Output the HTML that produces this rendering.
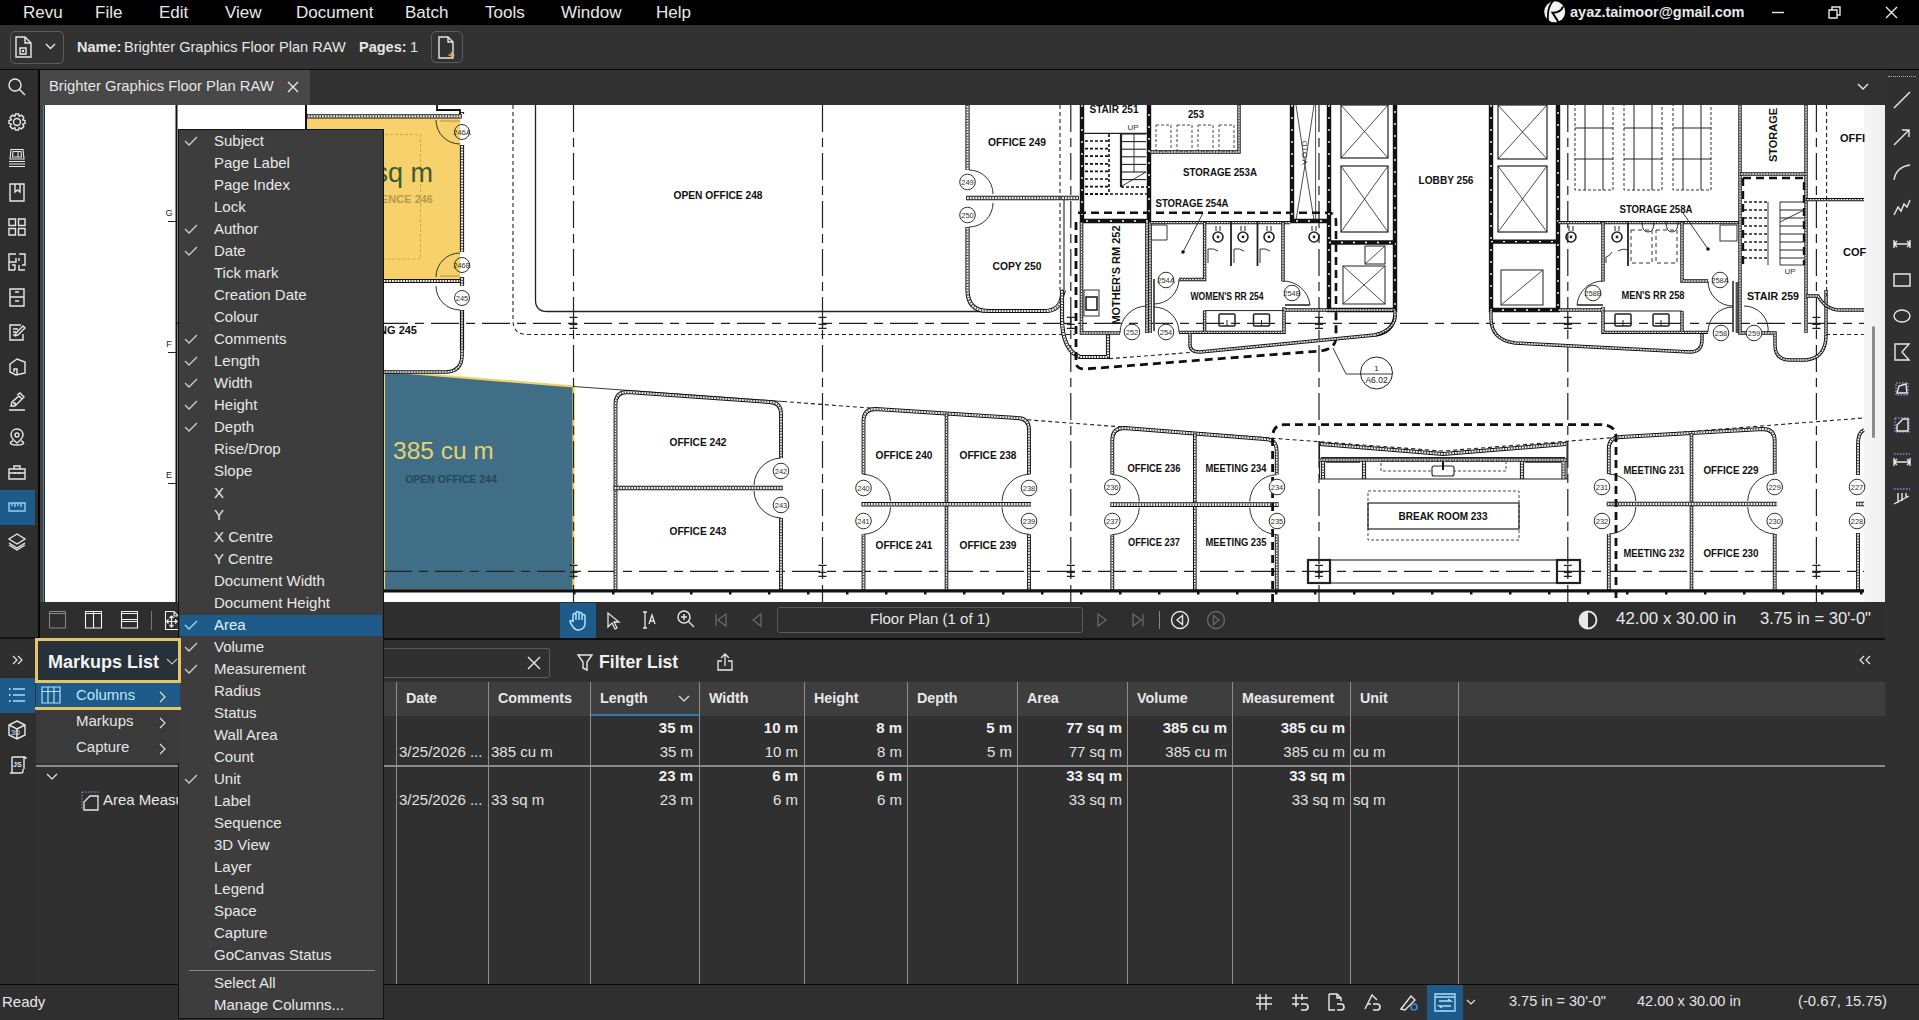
<!DOCTYPE html>
<html><head><meta charset="utf-8">
<style>
*{margin:0;padding:0;box-sizing:border-box}
html,body{width:1919px;height:1020px;overflow:hidden;background:#2c2c2c;font-family:"Liberation Sans",sans-serif;color:#e6e6e6}
.a{position:absolute}
.t{position:absolute;white-space:nowrap;line-height:1}
.b{font-weight:bold}
svg.i{position:absolute;overflow:visible}
svg.i *{fill:none;stroke:#e8e8e8;stroke-width:1.4}
#menubar{left:0;top:0;width:1919px;height:25px;background:#000}
#menubar .t{font-size:17px;top:4px;color:#e8e8e8}
#toolbar{left:0;top:25px;width:1919px;height:45px;background:#323232;border-bottom:1px solid #070707}
#leftbar{left:0;top:70px;width:38px;height:914px;background:#2e2e2e}
#vsep{left:38px;top:70px;width:1.5px;height:568px;background:#050505}
#tabbar{left:40px;top:70px;width:1845px;height:35px;background:#313131}
#tab{left:40px;top:70px;width:270px;height:35px;background:#484848}
#rightbar{left:1885px;top:70px;width:34px;height:914px;background:#303030}
#docwrap{left:40px;top:105px;width:1845px;height:497px;background:#454545}
#doc{left:45px;top:105px;width:1840px;height:497px;background:#fff;overflow:hidden}
#viewbar{left:40px;top:602px;width:1845px;height:38px;background:#2e2e2e;border-bottom:2px solid #0c0c0c}
#panel{left:35px;top:640px;width:1850px;height:344px;background:#303030}
#status{left:0;top:984px;width:1919px;height:36px;background:#2f2f2f;border-top:1px solid #0a0a0a}
#menu{left:178px;top:129px;width:206px;height:890px;background:#3d3d3d;border:1px solid #121212}
.mi{position:absolute;left:35px;font-size:15px;color:#e8e8e8;white-space:nowrap;line-height:1}
.ck{position:absolute;left:5px;width:14px;height:10px}
.th{position:absolute;top:691px;font-size:14.3px;font-weight:bold;color:#e8e8e8;white-space:nowrap;line-height:1}
.cl{position:absolute;top:682px;width:1px;height:302px;background:#8e8e8e}
.v{position:absolute;font-size:15px;white-space:nowrap;line-height:1;color:#e2e2e2}
.vb{font-weight:bold;color:#f0f0f0}
.r{text-align:right}
</style></head><body>

<div id="menubar" class="a">
<div class="t" style="left:23px">Revu</div>
<div class="t" style="left:95px">File</div>
<div class="t" style="left:159px">Edit</div>
<div class="t" style="left:225px">View</div>
<div class="t" style="left:296px">Document</div>
<div class="t" style="left:405px">Batch</div>
<div class="t" style="left:485px">Tools</div>
<div class="t" style="left:561px">Window</div>
<div class="t" style="left:656px">Help</div>
<svg class="i" style="left:1543px;top:0px" width="24" height="25" viewBox="0 0 24 25"><circle cx="11.7" cy="11.8" r="10.5" style="fill:#f2f2f2;stroke:none"/><path d="M10.5 0.5 Q3.5 7 5.2 22" style="stroke:#000;stroke-width:1.8"/><path d="M20 6.5 Q18 12.5 9.5 12.8 L16 23" style="stroke:#000;stroke-width:2"/></svg>
<div class="t b" style="left:1570px;top:5px;font-size:14.5px">ayaz.taimoor@gmail.com</div>
<svg class="i" style="left:1770px;top:5px" width="16" height="16"><path d="M2 7.5 H14"/></svg>
<svg class="i" style="left:1827px;top:5px" width="16" height="16"><path d="M2 5 H10 V13 H2 Z M5 5 V2 H13 V10 H10"/></svg>
<svg class="i" style="left:1884px;top:5px" width="16" height="16"><path d="M2 2 L13 13 M13 2 L2 13"/></svg>
</div>
<div id="toolbar" class="a"></div>
<div class="a" style="left:10px;top:31px;width:54px;height:33px;border:1.5px solid #5c5c5c;border-radius:5px"></div>
<svg class="i" style="left:15px;top:36px" width="20" height="24"><path d="M1 1 H10 L16 7 V21 H1 Z M10 1 V7 H16"/><path d="M5 12 H11 V18 H5 Z"/><rect x="7" y="14" width="2" height="2" style="fill:#e8e8e8;stroke:none"/></svg>
<svg class="i" style="left:45px;top:43px" width="12" height="8"><path d="M1 1 L5.5 5.5 L10 1"/></svg>
<div class="t b" style="left:77px;top:40px;font-size:14.5px">Name:</div>
<div class="t" style="left:124px;top:40px;font-size:14.6px">Brighter Graphics Floor Plan RAW</div>
<div class="t b" style="left:359px;top:40px;font-size:14.5px">Pages:</div>
<div class="t" style="left:410px;top:40px;font-size:14.5px">1</div>
<div class="a" style="left:431px;top:31px;width:32px;height:32px;border:1.5px solid #5c5c5c;border-radius:5px"></div>
<svg class="i" style="left:438px;top:36px" width="20" height="24"><path d="M1 1 H10 L15 6 V22 H1 Z M10 1 V6 H15"/><path d="M13.5 16 V22 M10.5 19 H16.5" style="stroke:#d8b040"/></svg>
<div id="leftbar" class="a"></div>
<div id="vsep" class="a"></div>
<div class="a" style="left:0;top:490px;width:35px;height:35px;background:#1f5b8a"></div>
<svg class="i" style="left:7px;top:77px" width="20" height="20" viewBox="0 0 20 20"><circle cx="8" cy="8" r="6"/><path d="M12.5 12.5 L18 18"/></svg>
<svg class="i" style="left:7px;top:112px" width="20" height="20" viewBox="0 0 20 20"><circle cx="10" cy="10" r="3.5"/><path d="M8.5 2 H11.5 L12.2 4.3 L14.5 3.2 L16.8 5.5 L15.7 7.8 L18 8.5 V11.5 L15.7 12.2 L16.8 14.5 L14.5 16.8 L12.2 15.7 L11.5 18 H8.5 L7.8 15.7 L5.5 16.8 L3.2 14.5 L4.3 12.2 L2 11.5 V8.5 L4.3 7.8 L3.2 5.5 L5.5 3.2 L7.8 4.3 Z"/></svg>
<svg class="i" style="left:7px;top:147px" width="20" height="20" viewBox="0 0 20 20"><path d="M4 2.5 H16 L17 12 H3 Z M6 4.5 H14 L14.5 10 H5.5 Z M11 4.5 V10 M2 14.5 H18 M2 17 H18 M2 19.5 H18" style="stroke-width:1.1"/></svg>
<svg class="i" style="left:7px;top:182px" width="20" height="20" viewBox="0 0 20 20"><path d="M3 2 H17 V19 H3 Z M8 2 V10 L10.5 8 L13 10 V2"/></svg>
<svg class="i" style="left:7px;top:217px" width="20" height="20" viewBox="0 0 20 20"><path d="M2 2 H8.5 V8.5 H2 Z M11.5 2 H18 V8.5 H11.5 Z M2 11.5 H8.5 V18 H2 Z M11.5 11.5 H18 V18 H11.5 Z"/></svg>
<svg class="i" style="left:7px;top:252px" width="20" height="20" viewBox="0 0 20 20"><path d="M9 2 H2 V18 H8 M8 18 V13 H5 M2 10 H9 V6 M12 2 H18 V13 H15 M12 13 V18 H18 M12 6 V9"/></svg>
<svg class="i" style="left:7px;top:287px" width="20" height="20" viewBox="0 0 20 20"><path d="M3 2 H17 V19 H3 Z M3 10 H17 M8 5 H12 M8 14 H12"/></svg>
<svg class="i" style="left:7px;top:322px" width="20" height="20" viewBox="0 0 20 20"><path d="M14 3 H3 V18 H16 V12 M6 7 H11 M6 10 H9 M6 13 H9 M11 13 L18 6 L16 4 L9 11 L8.5 14 Z"/></svg>
<svg class="i" style="left:7px;top:357px" width="20" height="20" viewBox="0 0 20 20"><path d="M3 7 L10 2 L18 5 V16 L9 18 L3 15 Z M7 15 V12 H10 V17"/></svg>
<svg class="i" style="left:7px;top:392px" width="20" height="20" viewBox="0 0 20 20"><path d="M2 18 H18 M8 14 L4 14 L5 10 L12 4 L15 7 L8 14 M10 3 L13 1 L17 5 L15 7 M6 11 H8 V13"/></svg>
<svg class="i" style="left:7px;top:427px" width="20" height="20" viewBox="0 0 20 20"><path d="M10 2 C6 2 4 5 4 8 C4 11 10 16 10 16 C10 16 16 11 16 8 C16 5 14 2 10 2 Z"/><circle cx="10" cy="8" r="2"/><path d="M6 14 C2 15 2 18 10 18 C18 18 18 15 14 14"/></svg>
<svg class="i" style="left:7px;top:462px" width="20" height="20" viewBox="0 0 20 20"><path d="M2 7 H18 V17 H2 Z M7 7 V4 H13 V7 M2 11 H18 M8 10 V12 M12 10 V12"/></svg>
<svg class="i" style="left:7px;top:497px" width="20" height="20" viewBox="0 0 20 20"><path d="M2 6 H18 V14 H2 Z M5 6 V9 M8 6 V10 M11 6 V9 M14 6 V10" style="stroke:#8fd0f0"/></svg>
<svg class="i" style="left:7px;top:532px" width="20" height="20" viewBox="0 0 20 20"><path d="M10 2 L18 7 L10 12 L2 7 Z M2 11 L10 16 L18 11 M2 13 L10 18 L18 13"/></svg>
<div class="a" style="left:0;top:637px;width:38px;height:2px;background:#141414"></div>
<div class="a" style="left:35px;top:640px;width:1px;height:344px;background:#1a1a1a"></div>
<div class="a" style="left:0;top:678px;width:35px;height:35px;background:#1f5b8a"></div>
<svg class="i" style="left:12px;top:655px" width="12" height="10"><path d="M1 1 L5 5 L1 9 M6 1 L10 5 L6 9" style="stroke-width:1.2"/></svg>
<svg class="i" style="left:8px;top:687px" width="18" height="16"><path d="M5 2 H17 M5 8 H17 M5 14 H17" style="stroke:#9fe0ff;stroke-width:1.6"/><path d="M1 2 H2.5 M1 8 H2.5 M1 14 H2.5" style="stroke:#9fe0ff;stroke-width:1.8"/></svg>
<svg class="i" style="left:7px;top:720px" width="20" height="20"><path d="M10 1 L18 5 V15 L10 19 L2 15 V5 Z M2 5 L10 9 L18 5 M10 9 V19"/><text x="4" y="15" style="font-size:7px;fill:#e8e8e8;stroke:none;font-family:Liberation Sans">3D</text></svg>
<svg class="i" style="left:7px;top:754px" width="20" height="22"><path d="M5 3 H17 V15 M5 3 V19 H13 M3 19 H14 Q16 19 16 17 V15 M17 3 Q19 3 19 5"/><text x="6" y="13" style="font-size:7px;fill:#e8e8e8;stroke:none;font-family:Liberation Sans;font-weight:bold">JS</text></svg>
<div id="tabbar" class="a"></div>
<div id="tab" class="a"></div>
<div class="t" style="left:49px;top:79px;font-size:14.8px;color:#e6e6e6">Brighter Graphics Floor Plan RAW</div>
<svg class="i" style="left:287px;top:81px" width="12" height="12"><path d="M1 1 L11 11 M11 1 L1 11"/></svg>
<svg class="i" style="left:1857px;top:83px" width="12" height="8"><path d="M1 1 L6 6 L11 1"/></svg>
<div id="rightbar" class="a"></div>
<div class="a" style="left:1888px;top:76px;width:28px;height:0;border-top:1px dotted #aaa"></div>
<svg class="i" style="left:1892px;top:90px" width="20" height="20" viewBox="0 0 20 20"><path d="M2 18 L18 2"/></svg>
<svg class="i" style="left:1892px;top:127px" width="20" height="20" viewBox="0 0 20 20"><path d="M2 18 L17 3 M10 3 H17 V10"/></svg>
<svg class="i" style="left:1892px;top:162px" width="20" height="20" viewBox="0 0 20 20"><path d="M2 18 Q4 5 18 3"/></svg>
<svg class="i" style="left:1892px;top:197px" width="20" height="20" viewBox="0 0 20 20"><path d="M2 18 L6 10 L9 14 L12 7 L15 10 L18 3"/></svg>
<svg class="i" style="left:1892px;top:234px" width="20" height="20" viewBox="0 0 20 20"><path d="M2 10 H18 M2 6 V14 M18 6 V14 M5 7 L2 10 L5 13 M15 7 L18 10 L15 13"/></svg>
<svg class="i" style="left:1892px;top:270px" width="20" height="20" viewBox="0 0 20 20"><path d="M2 4 H18 V16 H2 Z"/></svg>
<svg class="i" style="left:1892px;top:306px" width="20" height="20" viewBox="0 0 20 20"><ellipse cx="10" cy="10" rx="8" ry="6"/></svg>
<svg class="i" style="left:1892px;top:342px" width="20" height="20" viewBox="0 0 20 20"><path d="M3 2 H17 L10 10 L17 18 H3 Z"/></svg>
<svg class="i" style="left:1892px;top:379px" width="20" height="20" viewBox="0 0 20 20"><path d="M4 4 H16 V16 H4 Z" style="stroke-dasharray:1.5 1.5;stroke:#8a86d8"/><path d="M5 14 L7 7 L14 5 L15 14 Z"/></svg>
<svg class="i" style="left:1892px;top:415px" width="20" height="20" viewBox="0 0 20 20"><path d="M3 3 H17 V17 H3 Z" style="stroke-dasharray:1.5 1.5;stroke:#8a86d8"/><path d="M5 16 V10 L11 4 H16 V16 Z"/></svg>
<svg class="i" style="left:1892px;top:451px" width="20" height="20" viewBox="0 0 20 20"><path d="M2 3 H18" style="stroke-dasharray:1.5 1.5;stroke:#8a86d8"/><path d="M2 11 H18 M2 7 V15 M18 7 V15 M5 8 L2 11 L5 14 M15 8 L18 11 L15 14"/></svg>
<svg class="i" style="left:1892px;top:486px" width="20" height="20" viewBox="0 0 20 20"><path d="M2 3 H18" style="stroke-dasharray:1.5 1.5;stroke:#8a86d8"/><path d="M2 18 L17 10 M6 17 V7 M10 15 V7 M14 12 V7"/></svg>
<div id="docwrap" class="a"></div>
<div id="doc" class="a"></div>
<div class="a" style="left:43px;top:105px;width:1px;height:497px;background:#4f7a90"></div>
<div class="a" style="left:44px;top:105px;width:1px;height:497px;background:#163445"></div>
<div class="a" style="left:1864px;top:105px;width:21px;height:497px;background:linear-gradient(90deg,#f6f6f6,#eeeeee)"></div>
<div class="a" style="left:1872px;top:326px;width:3px;height:112px;background:#8a8a8a;border-radius:2px"></div>
<svg class="a" style="left:45px;top:105px" width="1840" height="497" viewBox="45 105 1840 497"><style>.wo{fill:none;stroke:#111}.wi{fill:none;stroke:#f4f4f4}.wh{fill:none;stroke:#333;stroke-dasharray:1 1.8}.bw{fill:none;stroke:#111;stroke-width:4.4}.bwi{fill:none;stroke:#fff;stroke-width:1.4;stroke-dasharray:2 10}.td{fill:none;stroke:#111;stroke-dasharray:8 5}.th1{fill:none;stroke:#222}.dt{fill:none;stroke:#222;stroke-width:1.1;stroke-dasharray:4 3}.gr{fill:none;stroke:#222;stroke-width:1.2;stroke-dasharray:27 6 9 6}.gh{fill:none;stroke:#222;stroke-width:1.2;stroke-dasharray:28 7 9 7}.tg{fill:#fff;stroke:#333;stroke-width:1}.tt{font-family:"Liberation Sans";font-size:7.5px;fill:#333;text-anchor:middle}.lb{font-family:"Liberation Sans";font-weight:bold;fill:#111;text-anchor:middle}.ar{fill:none;stroke:#333;stroke-width:1}.mk{fill:none;stroke:#222;stroke-width:1.3}</style><path d="M384 371 L573.5 386.5 V590 H384 Z" style="fill:#3f6e86;stroke:#e8d468;stroke-width:2.2"/><path d="M573.5 105 V602" class="gr"/><path d="M822.5 105 V602" class="gr"/><path d="M1070.8 105 V602" class="gr"/><path d="M1319 105 V602" class="gr"/><path d="M1567.8 105 V602" class="gr"/><path d="M1816.4 105 V602" class="gr"/><path d="M176 323.3 H1864" class="gh"/><path d="M384 571.3 H1864" class="gh"/><path d="M569.5 317.3 H577.5 M573.5 317.3 V329.3 M569.5 324.3 H577.5 M569.5 328.3 H577.5" class="mk"/><path d="M569.5 565.3 H577.5 M573.5 565.3 V577.3 M569.5 572.3 H577.5 M569.5 576.3 H577.5" class="mk"/><path d="M818.5 317.3 H826.5 M822.5 317.3 V329.3 M818.5 324.3 H826.5 M818.5 328.3 H826.5" class="mk"/><path d="M818.5 565.3 H826.5 M822.5 565.3 V577.3 M818.5 572.3 H826.5 M818.5 576.3 H826.5" class="mk"/><path d="M1066.8 317.3 H1074.8 M1070.8 317.3 V329.3 M1066.8 324.3 H1074.8 M1066.8 328.3 H1074.8" class="mk"/><path d="M1066.8 565.3 H1074.8 M1070.8 565.3 V577.3 M1066.8 572.3 H1074.8 M1066.8 576.3 H1074.8" class="mk"/><path d="M1315 317.3 H1323 M1319 317.3 V329.3 M1315 324.3 H1323 M1315 328.3 H1323" class="mk"/><path d="M1315 565.3 H1323 M1319 565.3 V577.3 M1315 572.3 H1323 M1315 576.3 H1323" class="mk"/><path d="M1563.8 317.3 H1571.8 M1567.8 317.3 V329.3 M1563.8 324.3 H1571.8 M1563.8 328.3 H1571.8" class="mk"/><path d="M1563.8 565.3 H1571.8 M1567.8 565.3 V577.3 M1563.8 572.3 H1571.8 M1563.8 576.3 H1571.8" class="mk"/><path d="M1812.4 317.3 H1820.4 M1816.4 317.3 V329.3 M1812.4 324.3 H1820.4 M1812.4 328.3 H1820.4" class="mk"/><path d="M1812.4 565.3 H1820.4 M1816.4 565.3 V577.3 M1812.4 572.3 H1820.4 M1812.4 576.3 H1820.4" class="mk"/><rect x="175.5" y="105" width="2" height="497" fill="#111"/><rect x="305" y="105" width="2" height="30" fill="#111"/><text x="169" y="216" style="font-size:9px;fill:#222;text-anchor:middle;font-family:Liberation Sans">G</text><path d="M168 221.5 H176" style="stroke:#222;stroke-width:1"/><text x="169" y="347" style="font-size:9px;fill:#222;text-anchor:middle;font-family:Liberation Sans">F</text><path d="M168 352.5 H176" style="stroke:#222;stroke-width:1"/><text x="169" y="478" style="font-size:9px;fill:#222;text-anchor:middle;font-family:Liberation Sans">E</text><path d="M168 483.5 H176" style="stroke:#222;stroke-width:1"/><rect x="307" y="118" width="153" height="161" fill="#f7d26c"/><path d="M330 134.6 H420.5 V259 H330" style="fill:none;stroke:#c9a64a;stroke-width:1;stroke-dasharray:3 2"/><path d="M307 116.3 H462" class="wo" style="stroke-width:4.2"/><path d="M307 116.3 H462" class="wi" style="stroke-width:2.2"/><path d="M307 116.3 H462" class="wh" style="stroke-width:2.2"/><path d="M307 281 H462" class="wo" style="stroke-width:4.2"/><path d="M307 281 H462" class="wi" style="stroke-width:2.2"/><path d="M307 281 H462" class="wh" style="stroke-width:2.2"/><path d="M462 112 V114 M462 145 V252 M462 277 V286 M462 310 V350" class="wo" style="stroke-width:4.2"/><path d="M462 112 V114 M462 145 V252 M462 277 V286 M462 310 V350" class="wi" style="stroke-width:2.2"/><path d="M462 112 V114 M462 145 V252 M462 277 V286 M462 310 V350" class="wh" style="stroke-width:2.2"/><path d="M437 105 V110 H460 V114" style="fill:none;stroke:#111;stroke-width:1.8"/><path d="M436 120 A24 24 0 0 0 460 144" class="ar"/><path d="M436 277 A24 24 0 0 1 460 253" class="ar"/><path d="M436 286 A24 24 0 0 0 460 310" class="ar"/><path d="M440 121 H460" style="stroke:#c9a64a;stroke-width:1.5"/><path d="M440 276 H460" style="stroke:#c9a64a;stroke-width:1.5"/><text x="433" y="182" style="font-size:27px;fill:#3a5a36;text-anchor:end;font-family:Liberation Sans">sq m</text><text x="433" y="203" style="font-size:11px;fill:#b49a48;text-anchor:end;font-family:Liberation Sans;font-weight:bold">ENCE  246</text><text x="417" y="334" style="font-size:11px;fill:#111;text-anchor:end;font-family:Liberation Sans;font-weight:bold">NG  245</text><path d="M535.5 105 V300 Q535.5 311.5 547 311.5 H1051" class="th1" style="stroke-width:1.3"/><path d="M513 105 V320 Q513 334.5 527 334.5 H1075" class="dt"/><text x="718" y="199" class="lb" style="font-size:11px" textLength="89" lengthAdjust="spacingAndGlyphs">OPEN OFFICE  248</text><path d="M967.5 105 V170 M967.5 227 V290 Q967.5 311 988 311 H1045 Q1060 311 1062 296 L1064 290" class="wo" style="stroke-width:4.2"/><path d="M967.5 105 V170 M967.5 227 V290 Q967.5 311 988 311 H1045 Q1060 311 1062 296 L1064 290" class="wi" style="stroke-width:2.2"/><path d="M967.5 105 V170 M967.5 227 V290 Q967.5 311 988 311 H1045 Q1060 311 1062 296 L1064 290" class="wh" style="stroke-width:2.2"/><path d="M966 198 H1079" class="wo" style="stroke-width:4.6"/><path d="M966 198 H1079" class="wi" style="stroke-width:2.5999999999999996"/><path d="M966 198 H1079" class="wh" style="stroke-width:2.5999999999999996"/><path d="M1062 290 V318 Q1062 350 1080 357 H1108 V333" class="wo" style="stroke-width:4.2"/><path d="M1062 290 V318 Q1062 350 1080 357 H1108 V333" class="wi" style="stroke-width:2.2"/><path d="M1062 290 V318 Q1062 350 1080 357 H1108 V333" class="wh" style="stroke-width:2.2"/><path d="M969 170 A24 24 0 0 1 993 194" class="ar"/><path d="M993 203 A24 24 0 0 1 969 227" class="ar"/><text x="1017" y="146" class="lb" style="font-size:11px" textLength="58" lengthAdjust="spacingAndGlyphs">OFFICE  249</text><text x="1017" y="270" class="lb" style="font-size:11px" textLength="49" lengthAdjust="spacingAndGlyphs">COPY  250</text><path d="M1060 105 V290" class="dt"/><path d="M1064 200 V290" class="th1" style="stroke-width:1.1"/><path d="M1082 105 V221 H1149 V105" class="bw"/><path d="M1082 105 V221 H1149 V105" class="bwi"/><path d="M1083 133.4 H1147" class="th1" style="stroke-width:1.3"/><path d="M1085 141.0 H1109" style="stroke:#111;stroke-width:1.7;stroke-dasharray:3 2"/><path d="M1085 148.6 H1109" style="stroke:#111;stroke-width:1.7;stroke-dasharray:3 2"/><path d="M1085 156.2 H1109" style="stroke:#111;stroke-width:1.7;stroke-dasharray:3 2"/><path d="M1085 163.8 H1109" style="stroke:#111;stroke-width:1.7;stroke-dasharray:3 2"/><path d="M1085 171.4 H1109" style="stroke:#111;stroke-width:1.7;stroke-dasharray:3 2"/><path d="M1085 179.0 H1109" style="stroke:#111;stroke-width:1.7;stroke-dasharray:3 2"/><path d="M1085 186.6 H1109" style="stroke:#111;stroke-width:1.7;stroke-dasharray:3 2"/><path d="M1085 194.2 H1109" style="stroke:#111;stroke-width:1.7;stroke-dasharray:3 2"/><path d="M1109 134 V194 M1085 194 H1147 M1121 187 H1147" style="stroke:#111;stroke-width:1.6;stroke-dasharray:3 2"/><path d="M1121 134 V187" class="th1" style="stroke-width:2.2"/><path d="M1121 134.0 H1146" class="th1" style="stroke-width:1.1"/><path d="M1121 141.6 H1146" class="th1" style="stroke-width:1.1"/><path d="M1121 149.2 H1146" class="th1" style="stroke-width:1.1"/><path d="M1121 156.8 H1146" class="th1" style="stroke-width:1.1"/><path d="M1121 164.4 H1146" class="th1" style="stroke-width:1.1"/><path d="M1121 172.0 H1146" class="th1" style="stroke-width:1.1"/><path d="M1121 179.6 H1146" class="th1" style="stroke-width:1.1"/><path d="M1134 134 V172 M1122 186 L1146 172" class="th1" style="stroke-width:0.9"/><text x="1114" y="113" class="lb" style="font-size:11px" textLength="49" lengthAdjust="spacingAndGlyphs">STAIR 251</text><text x="1133" y="130" style="font-size:8px;fill:#333;text-anchor:middle;font-family:Liberation Sans">UP</text><path d="M1239 105 V152 H1150" class="wo" style="stroke-width:3.4"/><path d="M1239 105 V152 H1150" class="wi" style="stroke-width:1.4"/><path d="M1239 105 V152 H1150" class="wh" style="stroke-width:1.4"/><rect x="1156" y="125" width="15" height="26" style="fill:none;stroke:#333;stroke-width:0.9;stroke-dasharray:3 2"/><rect x="1177" y="125" width="15" height="26" style="fill:none;stroke:#333;stroke-width:0.9;stroke-dasharray:3 2"/><rect x="1198" y="125" width="15" height="26" style="fill:none;stroke:#333;stroke-width:0.9;stroke-dasharray:3 2"/><rect x="1219" y="125" width="15" height="26" style="fill:none;stroke:#333;stroke-width:0.9;stroke-dasharray:3 2"/><text x="1196" y="118" class="lb" style="font-size:11px" textLength="16" lengthAdjust="spacingAndGlyphs">253</text><text x="1220" y="176" class="lb" style="font-size:11px" textLength="74" lengthAdjust="spacingAndGlyphs">STORAGE 253A</text><text x="1192" y="207" class="lb" style="font-size:11px" textLength="73" lengthAdjust="spacingAndGlyphs">STORAGE 254A</text><path d="M1078 212.7 H1328 Q1336 212.7 1336 222 V310" class="td" style="stroke-width:2.6"/><path d="M1292 105 V221 H1329" class="bw"/><path d="M1292 105 V221 H1329" class="bwi"/><path d="M1296 105 L1305 165 L1314 105 M1296 220 L1305 165 L1314 220 M1315.6 105 V221" class="th1" style="stroke-width:0.8"/><text x="1307" y="152" transform="rotate(-90 1307 152)" style="font-size:8px;fill:#333;text-anchor:middle;font-family:Liberation Sans;letter-spacing:1.5px">VOID</text><path d="M1329 105 V310 H1395 V105" class="bw"/><path d="M1329 105 V310 H1395 V105" class="bwi"/><path d="M1329 242.5 H1395" class="bw"/><path d="M1329 242.5 H1395" class="bwi"/><rect x="1341" y="105" width="47" height="53" style="fill:none;stroke:#222;stroke-width:1.2"/><path d="M1341 105 L1388 158 M1388 105 L1341 158" class="th1" style="stroke-width:0.8"/><rect x="1341" y="166" width="47" height="66" style="fill:none;stroke:#222;stroke-width:1.2"/><path d="M1341 166 L1388 232 M1388 166 L1341 232" class="th1" style="stroke-width:0.8"/><rect x="1343" y="266" width="42" height="38" style="fill:none;stroke:#222;stroke-width:1"/><path d="M1343 304 L1385 266 M1343 266 L1385 304" class="th1" style="stroke-width:0.8"/><rect x="1365" y="246" width="20" height="18" style="fill:none;stroke:#222;stroke-width:1"/><path d="M1365 264 L1385 246" class="th1" style="stroke-width:0.8"/><path d="M1081.5 222 V333 H1120 M1147 333 V222" class="wo" style="stroke-width:3.6"/><path d="M1081.5 222 V333 H1120 M1147 333 V222" class="wi" style="stroke-width:1.6"/><path d="M1081.5 222 V333 H1120 M1147 333 V222" class="wh" style="stroke-width:1.6"/><path d="M1150 222 V333" class="wo" style="stroke-width:3.6"/><path d="M1150 222 V333" class="wi" style="stroke-width:1.6"/><path d="M1150 222 V333" class="wh" style="stroke-width:1.6"/><path d="M1076 222 V362 Q1076 369 1085 369 L1320 351 Q1336 349 1336 337 V310" class="td" style="stroke-width:2.8"/><rect x="1084" y="290" width="15" height="26" style="fill:none;stroke:#333;stroke-width:1"/><rect x="1086" y="297" width="11" height="13" style="fill:none;stroke:#222;stroke-width:1.6"/><text x="1120" y="275" transform="rotate(-90 1120 275)" style="font-size:11px;fill:#111;text-anchor:middle;font-family:Liberation Sans;font-weight:bold">MOTHER'S RM 252</text><path d="M1120 333 A27 27 0 0 1 1147 306" class="ar"/><path d="M1150 222.6 H1290" class="wo" style="stroke-width:3.4"/><path d="M1150 222.6 H1290" class="wi" style="stroke-width:1.4"/><path d="M1150 222.6 H1290" class="wh" style="stroke-width:1.4"/><path d="M1204.6 222 V279.5 H1179 M1283 222 V281.5" class="wo" style="stroke-width:3.4"/><path d="M1204.6 222 V279.5 H1179 M1283 222 V281.5" class="wi" style="stroke-width:1.4"/><path d="M1204.6 222 V279.5 H1179 M1283 222 V281.5" class="wh" style="stroke-width:1.4"/><path d="M1179 332.4 H1284 V307 M1283 310 H1395" class="wo" style="stroke-width:3.4"/><path d="M1179 332.4 H1284 V307 M1283 310 H1395" class="wi" style="stroke-width:1.4"/><path d="M1179 332.4 H1284 V307 M1283 310 H1395" class="wh" style="stroke-width:1.4"/><path d="M1204.6 310.6 V332" class="wo" style="stroke-width:3.4"/><path d="M1204.6 310.6 V332" class="wi" style="stroke-width:1.4"/><path d="M1204.6 310.6 V332" class="wh" style="stroke-width:1.4"/><path d="M1205 310.6 H1283" class="th1" style="stroke-width:1"/><path d="M1154 279 V331" style="stroke:#555;stroke-width:2"/><path d="M1285 305 H1310" style="stroke:#555;stroke-width:2"/><path d="M1179 279 A25 25 0 0 1 1154 304" class="ar"/><path d="M1154 307 A25 25 0 0 1 1179 332" class="ar"/><path d="M1283 281 A27 27 0 0 1 1310 305" class="ar"/><circle cx="1218" cy="237" r="5" style="fill:none;stroke:#222;stroke-width:1.6"/><circle cx="1218" cy="237" r="1.4" fill="#222"/><path d="M1216 226 V231 M1220 226 V231" style="stroke:#222;stroke-width:1"/><circle cx="1243" cy="237" r="5" style="fill:none;stroke:#222;stroke-width:1.6"/><circle cx="1243" cy="237" r="1.4" fill="#222"/><path d="M1241 226 V231 M1245 226 V231" style="stroke:#222;stroke-width:1"/><circle cx="1269" cy="237" r="5" style="fill:none;stroke:#222;stroke-width:1.6"/><circle cx="1269" cy="237" r="1.4" fill="#222"/><path d="M1267 226 V231 M1271 226 V231" style="stroke:#222;stroke-width:1"/><circle cx="1314" cy="237" r="5" style="fill:none;stroke:#222;stroke-width:1.6"/><circle cx="1314" cy="237" r="1.4" fill="#222"/><path d="M1312 226 V231 M1316 226 V231" style="stroke:#222;stroke-width:1"/><path d="M1231 222 V266 M1257.5 222 V266" class="th1" style="stroke-width:1.8"/><path d="M1208 263 V249 Q1214 248 1218 251" class="ar"/><path d="M1234 263 V249 Q1240 248 1244 251" class="ar"/><path d="M1260 263 V249 Q1266 248 1270 251" class="ar"/><path d="M1152 225 H1167 V240 H1152 M1203 213 L1183 252" class="th1" style="stroke-width:0.9"/><circle cx="1183" cy="252" r="1.8" fill="#111"/><rect x="1219" y="314" width="16" height="12" rx="1" style="fill:none;stroke:#222;stroke-width:1.5"/><path d="M1227 326 V320" style="stroke:#222;stroke-width:1"/><rect x="1253.5" y="314" width="16" height="12" rx="1" style="fill:none;stroke:#222;stroke-width:1.5"/><path d="M1261.5 326 V320" style="stroke:#222;stroke-width:1"/><text x="1227" y="300" class="lb" style="font-size:10.5px" textLength="73" lengthAdjust="spacingAndGlyphs">WOMEN'S RR  254</text><path d="M1190 333 V345 Q1190 352 1200 352 L1375 335 Q1393 333 1395 315" class="wo" style="stroke-width:3.4"/><path d="M1190 333 V345 Q1190 352 1200 352 L1375 335 Q1393 333 1395 315" class="wi" style="stroke-width:1.4"/><path d="M1190 333 V345 Q1190 352 1200 352 L1375 335 Q1393 333 1395 315" class="wh" style="stroke-width:1.4"/><path d="M1109 358.7 L1190 352.5" class="dt"/><circle cx="1376.5" cy="373" r="16" style="fill:none;stroke:#222;stroke-width:1"/><path d="M1361 374 H1392 M1333 348 L1346 374 H1361" class="th1" style="stroke-width:0.9"/><text x="1376.5" y="371" style="font-size:8px;fill:#222;text-anchor:middle;font-family:Liberation Sans">1</text><text x="1376.5" y="382.5" style="font-size:8.5px;fill:#222;text-anchor:middle;font-family:Liberation Sans">A6.02</text><text x="1446" y="184" class="lb" style="font-size:11px" textLength="55" lengthAdjust="spacingAndGlyphs">LOBBY  256</text><path d="M1491 105 V310 H1558 V105" class="bw"/><path d="M1491 105 V310 H1558 V105" class="bwi"/><path d="M1491 241.6 H1558" class="bw"/><path d="M1491 241.6 H1558" class="bwi"/><rect x="1498" y="105" width="49" height="54" style="fill:none;stroke:#222;stroke-width:1.2"/><path d="M1498 105 L1547 159 M1547 105 L1498 159" class="th1" style="stroke-width:0.8"/><rect x="1498" y="166" width="49" height="66" style="fill:none;stroke:#222;stroke-width:1.2"/><path d="M1498 166 L1547 232 M1547 166 L1498 232" class="th1" style="stroke-width:0.8"/><rect x="1501" y="270" width="42" height="35" style="fill:none;stroke:#222;stroke-width:1"/><path d="M1501 305 L1543 270" class="th1" style="stroke-width:0.8"/><path d="M1491 310 V318 Q1491 340 1515 343 L1690 352 Q1702 352 1702 340 V332" class="wo" style="stroke-width:3.4"/><path d="M1491 310 V318 Q1491 340 1515 343 L1690 352 Q1702 352 1702 340 V332" class="wi" style="stroke-width:1.4"/><path d="M1491 310 V318 Q1491 340 1515 343 L1690 352 Q1702 352 1702 340 V332" class="wh" style="stroke-width:1.4"/><path d="M1395 310 V318 Q1393 330 1375 335" class="wo" style="stroke-width:3.4"/><path d="M1395 310 V318 Q1393 330 1375 335" class="wi" style="stroke-width:1.4"/><path d="M1395 310 V318 Q1393 330 1375 335" class="wh" style="stroke-width:1.4"/><rect x="1575" y="100" width="38" height="90" style="fill:none;stroke:#333;stroke-width:1;stroke-dasharray:3 2"/><path d="M1585 105 V190 M1603 105 V190 M1575 128 H1613 M1575 159 H1613" class="th1" style="stroke-width:1"/><rect x="1624" y="100" width="38" height="90" style="fill:none;stroke:#333;stroke-width:1;stroke-dasharray:3 2"/><path d="M1634 105 V190 M1652 105 V190 M1624 128 H1662 M1624 159 H1662" class="th1" style="stroke-width:1"/><rect x="1673" y="100" width="38" height="90" style="fill:none;stroke:#333;stroke-width:1;stroke-dasharray:3 2"/><path d="M1683 105 V190 M1701 105 V190 M1673 128 H1711 M1673 159 H1711" class="th1" style="stroke-width:1"/><text x="1656" y="213" class="lb" style="font-size:11px" textLength="73" lengthAdjust="spacingAndGlyphs">STORAGE 258A</text><path d="M1558 222.6 H1740" class="wo" style="stroke-width:3.4"/><path d="M1558 222.6 H1740" class="wi" style="stroke-width:1.4"/><path d="M1558 222.6 H1740" class="wh" style="stroke-width:1.4"/><path d="M1603 222 V281.5 M1603 307 V332.4 H1708 M1558 310 H1603" class="wo" style="stroke-width:3.4"/><path d="M1603 222 V281.5 M1603 307 V332.4 H1708 M1558 310 H1603" class="wi" style="stroke-width:1.4"/><path d="M1603 222 V281.5 M1603 307 V332.4 H1708 M1558 310 H1603" class="wh" style="stroke-width:1.4"/><path d="M1682 222 V281 H1708" class="wo" style="stroke-width:3.4"/><path d="M1682 222 V281 H1708" class="wi" style="stroke-width:1.4"/><path d="M1682 222 V281 H1708" class="wh" style="stroke-width:1.4"/><path d="M1682 311 V332" class="wo" style="stroke-width:3.4"/><path d="M1682 311 V332" class="wi" style="stroke-width:1.4"/><path d="M1682 311 V332" class="wh" style="stroke-width:1.4"/><path d="M1603 311 H1682" class="th1" style="stroke-width:1"/><path d="M1577 305 H1603" style="stroke:#555;stroke-width:2"/><path d="M1733 281 V332" style="stroke:#555;stroke-width:2"/><path d="M1577 305 A26 26 0 0 1 1603 281" class="ar"/><path d="M1708 281 A25 25 0 0 0 1733 306" class="ar"/><path d="M1733 307 A25 25 0 0 0 1708 332" class="ar"/><circle cx="1571" cy="237" r="5" style="fill:none;stroke:#222;stroke-width:1.6"/><circle cx="1571" cy="237" r="1.4" fill="#222"/><path d="M1569 226 V231 M1573 226 V231" style="stroke:#222;stroke-width:1"/><circle cx="1617" cy="237" r="5" style="fill:none;stroke:#222;stroke-width:1.6"/><circle cx="1617" cy="237" r="1.4" fill="#222"/><path d="M1615 226 V231 M1619 226 V231" style="stroke:#222;stroke-width:1"/><path d="M1628 222 V266" class="th1" style="stroke-width:1.8"/><path d="M1606 263 V257 Q1610 256 1612 252" class="ar"/><path d="M1618 251 Q1624 248 1627 250" class="ar"/><rect x="1631" y="230" width="21" height="33" style="fill:none;stroke:#333;stroke-width:1;stroke-dasharray:4 3"/><rect x="1656" y="230" width="21" height="33" style="fill:none;stroke:#333;stroke-width:1;stroke-dasharray:4 3"/><path d="M1642 222 Q1642 232 1648 232 Q1654 232 1654 222 M1666 222 Q1666 232 1672 232 Q1678 232 1678 222" style="fill:none;stroke:#222;stroke-width:1"/><rect x="1720" y="225" width="17" height="16" style="fill:none;stroke:#333;stroke-width:1"/><path d="M1683 213 L1708 249" class="th1" style="stroke-width:0.9"/><circle cx="1708" cy="249" r="1.8" fill="#111"/><rect x="1615" y="314" width="16" height="12" rx="1" style="fill:none;stroke:#222;stroke-width:1.5"/><path d="M1623 326 V320" style="stroke:#222;stroke-width:1"/><rect x="1653" y="314" width="16" height="12" rx="1" style="fill:none;stroke:#222;stroke-width:1.5"/><path d="M1661 326 V320" style="stroke:#222;stroke-width:1"/><text x="1653" y="299" class="lb" style="font-size:10.5px" textLength="63" lengthAdjust="spacingAndGlyphs">MEN'S RR  258</text><path d="M1744 306 A24 24 0 0 1 1768 333" class="ar"/><path d="M1737 282 V333" class="wo" style="stroke-width:2.6"/><path d="M1737 282 V333" class="wi" style="stroke-width:0.6000000000000001"/><path d="M1737 282 V333" class="wh" style="stroke-width:0.6000000000000001"/><path d="M1740 105 V333 H1775 V345 Q1775 360 1790 360 H1806 Q1826 358 1826 335 V290" class="wo" style="stroke-width:3.4"/><path d="M1740 105 V333 H1775 V345 Q1775 360 1790 360 H1806 Q1826 358 1826 335 V290" class="wi" style="stroke-width:1.4"/><path d="M1740 105 V333 H1775 V345 Q1775 360 1790 360 H1806 Q1826 358 1826 335 V290" class="wh" style="stroke-width:1.4"/><path d="M1806 105 V333" class="wo" style="stroke-width:3.4"/><path d="M1806 105 V333" class="wi" style="stroke-width:1.4"/><path d="M1806 105 V333" class="wh" style="stroke-width:1.4"/><path d="M1740 174 H1806" class="wo" style="stroke-width:3.4"/><path d="M1740 174 H1806" class="wi" style="stroke-width:1.4"/><path d="M1740 174 H1806" class="wh" style="stroke-width:1.4"/><text x="1777" y="135" transform="rotate(-90 1777 135)" style="font-size:11px;fill:#111;text-anchor:middle;font-family:Liberation Sans;font-weight:bold">STORAGE</text><path d="M1743 178 H1804 V265" class="td" style="stroke-width:2.4"/><path d="M1743 178 V265" class="td" style="stroke-width:2.4"/><path d="M1744 202 H1768" style="stroke:#222;stroke-width:1.6;stroke-dasharray:3 2"/><path d="M1780 202 H1804" class="th1" style="stroke-width:1"/><path d="M1744 210 H1768" style="stroke:#222;stroke-width:1.6;stroke-dasharray:3 2"/><path d="M1780 210 H1804" class="th1" style="stroke-width:1"/><path d="M1744 218 H1768" style="stroke:#222;stroke-width:1.6;stroke-dasharray:3 2"/><path d="M1780 218 H1804" class="th1" style="stroke-width:1"/><path d="M1744 226 H1768" style="stroke:#222;stroke-width:1.6;stroke-dasharray:3 2"/><path d="M1780 226 H1804" class="th1" style="stroke-width:1"/><path d="M1744 234 H1768" style="stroke:#222;stroke-width:1.6;stroke-dasharray:3 2"/><path d="M1780 234 H1804" class="th1" style="stroke-width:1"/><path d="M1744 242 H1768" style="stroke:#222;stroke-width:1.6;stroke-dasharray:3 2"/><path d="M1780 242 H1804" class="th1" style="stroke-width:1"/><path d="M1744 250 H1768" style="stroke:#222;stroke-width:1.6;stroke-dasharray:3 2"/><path d="M1780 250 H1804" class="th1" style="stroke-width:1"/><path d="M1744 258 H1768" style="stroke:#222;stroke-width:1.6;stroke-dasharray:3 2"/><path d="M1780 258 H1804" class="th1" style="stroke-width:1"/><path d="M1768 202 V265 M1780 202 V265 M1780 265 H1804 M1780 222 L1804 210" class="th1" style="stroke-width:0.9"/><text x="1790" y="274" style="font-size:8px;fill:#333;text-anchor:middle;font-family:Liberation Sans">UP</text><text x="1773" y="300" class="lb" style="font-size:11px" textLength="52" lengthAdjust="spacingAndGlyphs">STAIR  259</text><path d="M1806 199.6 H1864" class="wo" style="stroke-width:3.4"/><path d="M1806 199.6 H1864" class="wi" style="stroke-width:1.4"/><path d="M1806 199.6 H1864" class="wh" style="stroke-width:1.4"/><path d="M1806 296 H1818 Q1826 310 1840 310 H1864" class="wo" style="stroke-width:3.4"/><path d="M1806 296 H1818 Q1826 310 1840 310 H1864" class="wi" style="stroke-width:1.4"/><path d="M1806 296 H1818 Q1826 310 1840 310 H1864" class="wh" style="stroke-width:1.4"/><path d="M1826.6 105 V296" class="dt"/><path d="M1826 334.5 H1864" class="dt"/><text x="1840" y="142" style="font-size:11px;fill:#111;font-family:Liberation Sans;font-weight:bold">OFFI</text><text x="1843" y="256" style="font-size:11px;fill:#111;font-family:Liberation Sans;font-weight:bold">COF</text><path d="M573.5 386.5 L783 401.5" class="th1" style="stroke-width:0.9"/><path d="M783 401.5 L1443 451 L1863 418" class="dt"/><text x="393" y="459" style="font-size:24.5px;fill:#e6d36c;font-family:Liberation Sans">385 cu m</text><text x="451" y="483" style="font-size:10.5px;fill:#24485a;text-anchor:middle;font-family:Liberation Sans;font-weight:bold">OPEN OFFICE  244</text><path d="M462 310 V355 Q462 372 445 372 H384" class="wo" style="stroke-width:3.6"/><path d="M462 310 V355 Q462 372 445 372 H384" class="wi" style="stroke-width:1.6"/><path d="M462 310 V355 Q462 372 445 372 H384" class="wh" style="stroke-width:1.6"/><path d="M615.5 590  V404 Q615.5 392 627.5 392 L769 402 Q781 402 781 414 V458 M781 518 V590" class="wo" style="stroke-width:3.8"/><path d="M615.5 590  V404 Q615.5 392 627.5 392 L769 402 Q781 402 781 414 V458 M781 518 V590" class="wi" style="stroke-width:1.7999999999999998"/><path d="M615.5 590  V404 Q615.5 392 627.5 392 L769 402 Q781 402 781 414 V458 M781 518 V590" class="wh" style="stroke-width:1.7999999999999998"/><path d="M613.5 488 H783" class="wo" style="stroke-width:4.6"/><path d="M613.5 488 H783" class="wi" style="stroke-width:2.5999999999999996"/><path d="M613.5 488 H783" class="wh" style="stroke-width:2.5999999999999996"/><path d="M781 458 A28 28 0 0 0 754 485 M754 491 A28 28 0 0 0 781 518" class="ar"/><text x="698" y="446" class="lb" style="font-size:11px" textLength="57" lengthAdjust="spacingAndGlyphs">OFFICE  242</text><text x="698" y="535" class="lb" style="font-size:11px" textLength="57" lengthAdjust="spacingAndGlyphs">OFFICE  243</text><path d="M863.5 590 V534.3 M863.5 474.3 V421 Q863.5 409 875.5 409 L1017 418 Q1029 418 1029 430 V474.3 M1029 534.3 V590" class="wo" style="stroke-width:3.8"/><path d="M863.5 590 V534.3 M863.5 474.3 V421 Q863.5 409 875.5 409 L1017 418 Q1029 418 1029 430 V474.3 M1029 534.3 V590" class="wi" style="stroke-width:1.7999999999999998"/><path d="M863.5 590 V534.3 M863.5 474.3 V421 Q863.5 409 875.5 409 L1017 418 Q1029 418 1029 430 V474.3 M1029 534.3 V590" class="wh" style="stroke-width:1.7999999999999998"/><path d="M946.5 413.5 V590" class="wo" style="stroke-width:3.6"/><path d="M946.5 413.5 V590" class="wi" style="stroke-width:1.6"/><path d="M946.5 413.5 V590" class="wh" style="stroke-width:1.6"/><path d="M861.5 504.3 H1031" class="wo" style="stroke-width:4.6"/><path d="M861.5 504.3 H1031" class="wi" style="stroke-width:2.5999999999999996"/><path d="M861.5 504.3 H1031" class="wh" style="stroke-width:2.5999999999999996"/><path d="M863.5 474.3 A28 28 0 0 1 890.5 501.3 M890.5 507.3 A28 28 0 0 1 863.5 534.3" class="ar"/><path d="M1029 474.3 A28 28 0 0 0 1002 501.3 M1002 507.3 A28 28 0 0 0 1029 534.3" class="ar"/><text x="904" y="459" class="lb" style="font-size:11px" textLength="57" lengthAdjust="spacingAndGlyphs">OFFICE  240</text><text x="988" y="459" class="lb" style="font-size:11px" textLength="57" lengthAdjust="spacingAndGlyphs">OFFICE  238</text><text x="904" y="549" class="lb" style="font-size:11px" textLength="57" lengthAdjust="spacingAndGlyphs">OFFICE  241</text><text x="988" y="549" class="lb" style="font-size:11px" textLength="57" lengthAdjust="spacingAndGlyphs">OFFICE  239</text><path d="M1112.3 590 V534.6 M1112.3 474.6 V440 Q1112.3 428 1124.3 428 L1264.7 439 Q1276.7 439 1276.7 451 V474.6 M1276.7 534.6 V590" class="wo" style="stroke-width:3.8"/><path d="M1112.3 590 V534.6 M1112.3 474.6 V440 Q1112.3 428 1124.3 428 L1264.7 439 Q1276.7 439 1276.7 451 V474.6 M1276.7 534.6 V590" class="wi" style="stroke-width:1.7999999999999998"/><path d="M1112.3 590 V534.6 M1112.3 474.6 V440 Q1112.3 428 1124.3 428 L1264.7 439 Q1276.7 439 1276.7 451 V474.6 M1276.7 534.6 V590" class="wh" style="stroke-width:1.7999999999999998"/><path d="M1194.8 433.5 V590" class="wo" style="stroke-width:3.6"/><path d="M1194.8 433.5 V590" class="wi" style="stroke-width:1.6"/><path d="M1194.8 433.5 V590" class="wh" style="stroke-width:1.6"/><path d="M1110.3 504.6 H1278.7" class="wo" style="stroke-width:4.6"/><path d="M1110.3 504.6 H1278.7" class="wi" style="stroke-width:2.5999999999999996"/><path d="M1110.3 504.6 H1278.7" class="wh" style="stroke-width:2.5999999999999996"/><path d="M1112.3 474.6 A28 28 0 0 1 1139.3 501.6 M1139.3 507.6 A28 28 0 0 1 1112.3 534.6" class="ar"/><path d="M1276.7 474.6 A28 28 0 0 0 1249.7 501.6 M1249.7 507.6 A28 28 0 0 0 1276.7 534.6" class="ar"/><text x="1154" y="472" class="lb" style="font-size:10.5px" textLength="53" lengthAdjust="spacingAndGlyphs">OFFICE 236</text><text x="1236" y="472" class="lb" style="font-size:10.5px" textLength="61" lengthAdjust="spacingAndGlyphs">MEETING  234</text><text x="1154" y="546" class="lb" style="font-size:10.5px" textLength="52" lengthAdjust="spacingAndGlyphs">OFFICE 237</text><text x="1236" y="546" class="lb" style="font-size:10.5px" textLength="61" lengthAdjust="spacingAndGlyphs">MEETING  235</text><path d="M1608.8 590 V534 M1608.8 474 V449 Q1608.8 437 1620.8 437 L1762.7 429 Q1774.7 429 1774.7 441 V474 M1774.7 534 V590" class="wo" style="stroke-width:3.8"/><path d="M1608.8 590 V534 M1608.8 474 V449 Q1608.8 437 1620.8 437 L1762.7 429 Q1774.7 429 1774.7 441 V474 M1774.7 534 V590" class="wi" style="stroke-width:1.7999999999999998"/><path d="M1608.8 590 V534 M1608.8 474 V449 Q1608.8 437 1620.8 437 L1762.7 429 Q1774.7 429 1774.7 441 V474 M1774.7 534 V590" class="wh" style="stroke-width:1.7999999999999998"/><path d="M1691.5 433.0 V590" class="wo" style="stroke-width:3.6"/><path d="M1691.5 433.0 V590" class="wi" style="stroke-width:1.6"/><path d="M1691.5 433.0 V590" class="wh" style="stroke-width:1.6"/><path d="M1606.8 504 H1776.7" class="wo" style="stroke-width:4.6"/><path d="M1606.8 504 H1776.7" class="wi" style="stroke-width:2.5999999999999996"/><path d="M1606.8 504 H1776.7" class="wh" style="stroke-width:2.5999999999999996"/><path d="M1608.8 474 A28 28 0 0 1 1635.8 501 M1635.8 507 A28 28 0 0 1 1608.8 534" class="ar"/><path d="M1774.7 474 A28 28 0 0 0 1747.7 501 M1747.7 507 A28 28 0 0 0 1774.7 534" class="ar"/><text x="1654" y="474" class="lb" style="font-size:10.5px" textLength="61" lengthAdjust="spacingAndGlyphs">MEETING  231</text><text x="1731" y="474" class="lb" style="font-size:10.5px" textLength="55" lengthAdjust="spacingAndGlyphs">OFFICE  229</text><text x="1654" y="557" class="lb" style="font-size:10.5px" textLength="61" lengthAdjust="spacingAndGlyphs">MEETING  232</text><text x="1731" y="557" class="lb" style="font-size:10.5px" textLength="55" lengthAdjust="spacingAndGlyphs">OFFICE  230</text><path d="M1858 590 V533 M1858 475 V445 Q1858 432 1864 430" class="wo" style="stroke-width:3.8"/><path d="M1858 590 V533 M1858 475 V445 Q1858 432 1864 430" class="wi" style="stroke-width:1.7999999999999998"/><path d="M1858 590 V533 M1858 475 V445 Q1858 432 1864 430" class="wh" style="stroke-width:1.7999999999999998"/><path d="M1856 504 H1864" class="wo" style="stroke-width:4.6"/><path d="M1856 504 H1864" class="wi" style="stroke-width:2.5999999999999996"/><path d="M1856 504 H1864" class="wh" style="stroke-width:2.5999999999999996"/><path d="M1272.6 602 V437 Q1272.6 424.6 1285 424.6 H1600 Q1616 424.6 1616 437 V602" class="td" style="stroke-width:2.8"/><path d="M1320 444 L1443 454 L1566 444" class="wo" style="stroke-width:4.2"/><path d="M1320 444 L1443 454 L1566 444" class="wi" style="stroke-width:2.2"/><path d="M1320 444 L1443 454 L1566 444" class="wh" style="stroke-width:2.2"/><path d="M1319.5 441 V479 H1567 V441 M1321 457.5 H1565" class="th1" style="stroke-width:1.1"/><path d="M1319.5 460 H1567" class="wo" style="stroke-width:3.4"/><path d="M1319.5 460 H1567" class="wi" style="stroke-width:1.4"/><path d="M1319.5 460 H1567" class="wh" style="stroke-width:1.4"/><path d="M1323 461 V479" class="wo" style="stroke-width:4.2"/><path d="M1323 461 V479" class="wi" style="stroke-width:2.2"/><path d="M1323 461 V479" class="wh" style="stroke-width:2.2"/><path d="M1364 461 V479" class="wo" style="stroke-width:4.2"/><path d="M1364 461 V479" class="wi" style="stroke-width:2.2"/><path d="M1364 461 V479" class="wh" style="stroke-width:2.2"/><path d="M1522 461 V479" class="wo" style="stroke-width:4.2"/><path d="M1522 461 V479" class="wi" style="stroke-width:2.2"/><path d="M1522 461 V479" class="wh" style="stroke-width:2.2"/><path d="M1563.5 461 V479" class="wo" style="stroke-width:4.2"/><path d="M1563.5 461 V479" class="wi" style="stroke-width:2.2"/><path d="M1563.5 461 V479" class="wh" style="stroke-width:2.2"/><path d="M1326 462 H1360 M1525 462 H1561" class="th1" style="stroke-width:1.6"/><rect x="1381" y="461" width="125" height="10" style="fill:none;stroke:#333;stroke-width:0.9;stroke-dasharray:3 2"/><rect x="1432" y="466" width="22" height="10" rx="2" style="fill:#fff;stroke:#222;stroke-width:1.1"/><path d="M1443 462 V470" style="stroke:#111;stroke-width:2"/><rect x="1368" y="491" width="151" height="49" style="fill:none;stroke:#333;stroke-width:0.9;stroke-dasharray:3 2"/><rect x="1368" y="503" width="151" height="26" style="fill:none;stroke:#222;stroke-width:1.2"/><text x="1443" y="520" class="lb" style="font-size:11px" textLength="89" lengthAdjust="spacingAndGlyphs">BREAK ROOM  233</text><rect x="1330" y="560" width="227" height="23" style="fill:none;stroke:#222;stroke-width:1.1"/><rect x="1557" y="560" width="23" height="23" style="fill:none;stroke:#222;stroke-width:2.2"/><rect x="1308" y="560" width="22" height="23" style="fill:none;stroke:#222;stroke-width:2.2"/><path d="M384 590.8 H1864" style="stroke:#111;stroke-width:3.2"/><rect x="573" y="590" width="2.5" height="4.5" fill="#111"/><rect x="612" y="590" width="2.5" height="4.5" fill="#111"/><rect x="651" y="590" width="2.5" height="4.5" fill="#111"/><rect x="690" y="590" width="2.5" height="4.5" fill="#111"/><rect x="729" y="590" width="2.5" height="4.5" fill="#111"/><rect x="768" y="590" width="2.5" height="4.5" fill="#111"/><rect x="807" y="590" width="2.5" height="4.5" fill="#111"/><rect x="846" y="590" width="2.5" height="4.5" fill="#111"/><rect x="885" y="590" width="2.5" height="4.5" fill="#111"/><rect x="924" y="590" width="2.5" height="4.5" fill="#111"/><rect x="963" y="590" width="2.5" height="4.5" fill="#111"/><rect x="1002" y="590" width="2.5" height="4.5" fill="#111"/><rect x="1041" y="590" width="2.5" height="4.5" fill="#111"/><rect x="1080" y="590" width="2.5" height="4.5" fill="#111"/><rect x="1119" y="590" width="2.5" height="4.5" fill="#111"/><rect x="1158" y="590" width="2.5" height="4.5" fill="#111"/><rect x="1197" y="590" width="2.5" height="4.5" fill="#111"/><rect x="1236" y="590" width="2.5" height="4.5" fill="#111"/><rect x="1275" y="590" width="2.5" height="4.5" fill="#111"/><rect x="1314" y="590" width="2.5" height="4.5" fill="#111"/><rect x="1353" y="590" width="2.5" height="4.5" fill="#111"/><rect x="1392" y="590" width="2.5" height="4.5" fill="#111"/><rect x="1431" y="590" width="2.5" height="4.5" fill="#111"/><rect x="1470" y="590" width="2.5" height="4.5" fill="#111"/><rect x="1509" y="590" width="2.5" height="4.5" fill="#111"/><rect x="1548" y="590" width="2.5" height="4.5" fill="#111"/><rect x="1587" y="590" width="2.5" height="4.5" fill="#111"/><rect x="1626" y="590" width="2.5" height="4.5" fill="#111"/><rect x="1665" y="590" width="2.5" height="4.5" fill="#111"/><rect x="1704" y="590" width="2.5" height="4.5" fill="#111"/><rect x="1743" y="590" width="2.5" height="4.5" fill="#111"/><rect x="1782" y="590" width="2.5" height="4.5" fill="#111"/><rect x="1821" y="590" width="2.5" height="4.5" fill="#111"/><rect x="1860" y="590" width="2.5" height="4.5" fill="#111"/><circle cx="462" cy="132" r="7.5" class="tg" style="fill:none"/><text x="462" y="135" class="tt">246A</text><circle cx="462" cy="265" r="7.5" class="tg" style="fill:none"/><text x="462" y="268" class="tt">246B</text><circle cx="462" cy="298" r="7.5" class="tg"/><text x="462" y="301" class="tt">245</text><circle cx="967.5" cy="182" r="7.8" class="tg"/><text x="967.5" y="185" class="tt">249</text><circle cx="967.5" cy="215" r="7.8" class="tg"/><text x="967.5" y="218" class="tt">250</text><circle cx="1132" cy="332" r="7.8" class="tg"/><text x="1132" y="335" class="tt">252</text><circle cx="1166" cy="332" r="7.8" class="tg"/><text x="1166" y="335" class="tt">254</text><circle cx="1166" cy="280" r="7.8" class="tg"/><text x="1166" y="283" class="tt">254A</text><circle cx="1292" cy="293" r="7.8" class="tg"/><text x="1292" y="296" class="tt">254B</text><circle cx="1593" cy="293" r="7.8" class="tg"/><text x="1593" y="296" class="tt">258B</text><circle cx="1720" cy="280" r="7.8" class="tg"/><text x="1720" y="283" class="tt">258A</text><circle cx="1721" cy="333" r="7.8" class="tg"/><text x="1721" y="336" class="tt">258</text><circle cx="1754" cy="333" r="7.8" class="tg"/><text x="1754" y="336" class="tt">259</text><circle cx="781" cy="471" r="7.8" class="tg"/><text x="781" y="474" class="tt">242</text><circle cx="781" cy="505" r="7.8" class="tg"/><text x="781" y="508" class="tt">243</text><circle cx="863.5" cy="488" r="7.8" class="tg"/><text x="863.5" y="491" class="tt">240</text><circle cx="863.5" cy="521" r="7.8" class="tg"/><text x="863.5" y="524" class="tt">241</text><circle cx="1029" cy="488" r="7.8" class="tg"/><text x="1029" y="491" class="tt">238</text><circle cx="1029" cy="521" r="7.8" class="tg"/><text x="1029" y="524" class="tt">239</text><circle cx="1112.3" cy="487" r="7.8" class="tg"/><text x="1112.3" y="490" class="tt">236</text><circle cx="1112.3" cy="521" r="7.8" class="tg"/><text x="1112.3" y="524" class="tt">237</text><circle cx="1277" cy="487" r="7.8" class="tg"/><text x="1277" y="490" class="tt">234</text><circle cx="1277" cy="521" r="7.8" class="tg"/><text x="1277" y="524" class="tt">235</text><circle cx="1602" cy="487" r="7.8" class="tg"/><text x="1602" y="490" class="tt">231</text><circle cx="1602" cy="521" r="7.8" class="tg"/><text x="1602" y="524" class="tt">232</text><circle cx="1774.7" cy="487" r="7.8" class="tg"/><text x="1774.7" y="490" class="tt">229</text><circle cx="1774.7" cy="521" r="7.8" class="tg"/><text x="1774.7" y="524" class="tt">230</text><circle cx="1857" cy="487" r="7.8" class="tg"/><text x="1857" y="490" class="tt">227</text><circle cx="1857" cy="521" r="7.8" class="tg"/><text x="1857" y="524" class="tt">228</text></svg>
<div id="viewbar" class="a"></div>
<svg class="i" style="left:48px;top:610px" width="20" height="20"><path d="M1.5 1.5 H17.5 V18 H1.5 Z M1.5 3.5 H17.5" style="stroke:#8a8a8a;stroke-width:1"/></svg>
<svg class="i" style="left:84px;top:610px" width="20" height="20"><path d="M1.5 1.5 H17.5 V18 H1.5 Z M9.5 1.5 V18 M1.5 3.5 H17.5" style="stroke:#f2f2f2;stroke-width:1.1"/></svg>
<svg class="i" style="left:120px;top:610px" width="20" height="20"><path d="M1.5 1.5 H17.5 V18 H1.5 Z M1.5 3.5 H17.5 M1.5 9.5 H17.5 M1.5 11.5 H17.5" style="stroke:#f2f2f2;stroke-width:1.1"/></svg>
<div class="a" style="left:151px;top:611px;width:1px;height:19px;background:#777"></div>
<svg class="i" style="left:164px;top:610px" width="20" height="22"><path d="M1.5 1.5 H10 L14.5 6 V19.5 H1.5 Z M10 1.5 V6 H14.5" style="stroke:#f2f2f2;stroke-width:1.1"/><path d="M7.5 6 V17 M2.5 11.5 H13 M5.5 8 L7.5 6 L9.5 8 M5.5 15 L7.5 17 L9.5 15 M4.5 9.5 L2.5 11.5 L4.5 13.5 M11 9.5 L13 11.5 L11 13.5" style="stroke:#f2f2f2;stroke-width:1.2"/></svg>
<div class="a" style="left:560px;top:603px;width:36px;height:35px;background:#1f5b8a"></div>
<svg class="i" style="left:568px;top:610px" width="20" height="22" viewBox="0 0 20 22"><path d="M5 12 V5 Q5 3.5 6.5 3.5 Q8 3.5 8 5 V10 M8 9 V3 Q8 1.5 9.5 1.5 Q11 1.5 11 3 V10 M11 9 V4 Q11 2.5 12.5 2.5 Q14 2.5 14 4 V10 M14 9 V6 Q14 4.5 15.5 4.5 Q17 4.5 17 6 V13 Q17 19 11 20 Q7 20 5 17 L2 12 Q1.5 10.5 3 10.5 Q4 10.5 5 12" style="stroke:#a8e4ff;stroke-width:1.5"/></svg>
<svg class="i" style="left:605px;top:611px" width="18" height="20"><path d="M3 2 L3 16 L7 12 L10 18 L12 17 L9 11 L14 11 Z" style="stroke-width:1.3"/></svg>
<svg class="i" style="left:640px;top:610px" width="20" height="20"><path d="M3 2 H7 M5 2 V18 M3 18 H7 M9 14 L12 5 L15 14 M10 11 H14" style="stroke-width:1.3"/></svg>
<svg class="i" style="left:676px;top:609px" width="20" height="20"><circle cx="8" cy="8" r="6"/><path d="M12.5 12.5 L18 18 M5 8 H11 M8 5 V11"/></svg>
<svg class="i" style="left:714px;top:612px" width="14" height="16"><path d="M2 2 V14 M12 2 L4 8 L12 14 Z" style="stroke:#666"/></svg>
<svg class="i" style="left:751px;top:613px" width="12" height="14"><path d="M10 1 L2 7 L10 13 Z" style="stroke:#666"/></svg>
<div class="a" style="left:777px;top:607px;width:306px;height:26px;border:1.5px solid #5a5a5a;border-radius:3px"></div>
<div class="t" style="left:870px;top:611px;font-size:15px;color:#e8e8e8">Floor Plan (1 of 1)</div>
<svg class="i" style="left:1096px;top:613px" width="12" height="14"><path d="M2 1 L10 7 L2 13 Z" style="stroke:#666"/></svg>
<svg class="i" style="left:1131px;top:612px" width="14" height="16"><path d="M12 2 V14 M2 2 L10 8 L2 14 Z" style="stroke:#666"/></svg>
<div class="a" style="left:1159px;top:611px;width:1px;height:18px;background:#888"></div>
<svg class="i" style="left:1170px;top:610px" width="20" height="20"><circle cx="10" cy="10" r="8.5"/><path d="M12.5 5.5 L7 10 L12.5 14.5 Z"/></svg>
<svg class="i" style="left:1206px;top:610px" width="20" height="20"><circle cx="10" cy="10" r="8.5" style="stroke:#666"/><path d="M7.5 5.5 L13 10 L7.5 14.5 Z" style="stroke:#666"/></svg>
<svg class="i" style="left:1578px;top:610px" width="20" height="20"><circle cx="10" cy="10" r="8.5" style="stroke-width:1.8"/><path d="M10 1.5 A8.5 8.5 0 0 0 10 18.5 Z" style="fill:#e8e8e8;stroke:none"/></svg>
<div class="t" style="left:1616px;top:611px;font-size:16.9px;color:#e8e8e8">42.00 x 30.00 in</div>
<div class="t" style="left:1760px;top:611px;font-size:16.6px;color:#e8e8e8">3.75 in = 30'-0"</div>
<div id="panel" class="a"></div>
<div class="a" style="left:370px;top:648px;width:180px;height:30px;border:1.5px solid #5a5a5a;border-radius:2px"></div>
<svg class="i" style="left:527px;top:656px" width="14" height="14"><path d="M1 1 L13 13 M13 1 L1 13"/></svg>
<svg class="i" style="left:577px;top:654px" width="16" height="18"><path d="M1 1 H15 L10 8 V16 L6 14 V8 Z" style="stroke-width:1.4"/></svg>
<div class="t b" style="left:599px;top:654px;font-size:17.6px;color:#f0f0f0">Filter List</div>
<svg class="i" style="left:716px;top:652px" width="18" height="20"><path d="M9 14 V2 M5 6 L9 2 L13 6 M6 9 H2 V18 H16 V9 H12" style="stroke-width:1.3"/></svg>
<svg class="i" style="left:1859px;top:655px" width="14" height="10"><path d="M5 1 L1 5 L5 9 M11 1 L7 5 L11 9" style="stroke-width:1.2"/></svg>
<div class="a" style="left:36px;top:682px;width:1849px;height:34px;background:#3e3e3e"></div>
<div class="a" style="left:591px;top:714px;width:108px;height:2px;background:#2a7ab8"></div>
<div class="a" style="left:36px;top:765px;width:1849px;height:2px;background:#8a8a8a"></div>
<div class="cl" style="left:396px"></div>
<div class="cl" style="left:488px"></div>
<div class="cl" style="left:590px"></div>
<div class="cl" style="left:699px"></div>
<div class="cl" style="left:804px"></div>
<div class="cl" style="left:907px"></div>
<div class="cl" style="left:1017px"></div>
<div class="cl" style="left:1127px"></div>
<div class="cl" style="left:1232px"></div>
<div class="cl" style="left:1350px"></div>
<div class="cl" style="left:1458px"></div>
<div class="th" style="left:406px">Date</div>
<div class="th" style="left:498px">Comments</div>
<div class="th" style="left:600px">Length</div>
<div class="th" style="left:709px">Width</div>
<div class="th" style="left:814px">Height</div>
<div class="th" style="left:917px">Depth</div>
<div class="th" style="left:1027px">Area</div>
<div class="th" style="left:1137px">Volume</div>
<div class="th" style="left:1242px">Measurement</div>
<div class="th" style="left:1360px">Unit</div>
<svg class="i" style="left:678px;top:695px" width="12" height="8"><path d="M1 1 L6 6 L11 1" style="stroke-width:1.2"/></svg>
<div class="v vb" style="left:493px;width:200px;top:720px;text-align:right">35 m</div>
<div class="v vb" style="left:598px;width:200px;top:720px;text-align:right">10 m</div>
<div class="v vb" style="left:702px;width:200px;top:720px;text-align:right">8 m</div>
<div class="v vb" style="left:812px;width:200px;top:720px;text-align:right">5 m</div>
<div class="v vb" style="left:922px;width:200px;top:720px;text-align:right">77 sq m</div>
<div class="v vb" style="left:1027px;width:200px;top:720px;text-align:right">385 cu m</div>
<div class="v vb" style="left:1145px;width:200px;top:720px;text-align:right">385 cu m</div>
<div class="v" style="left:493px;width:200px;top:744px;text-align:right">35 m</div>
<div class="v" style="left:598px;width:200px;top:744px;text-align:right">10 m</div>
<div class="v" style="left:702px;width:200px;top:744px;text-align:right">8 m</div>
<div class="v" style="left:812px;width:200px;top:744px;text-align:right">5 m</div>
<div class="v" style="left:922px;width:200px;top:744px;text-align:right">77 sq m</div>
<div class="v" style="left:1027px;width:200px;top:744px;text-align:right">385 cu m</div>
<div class="v" style="left:1145px;width:200px;top:744px;text-align:right">385 cu m</div>
<div class="v vb" style="left:493px;width:200px;top:768px;text-align:right">23 m</div>
<div class="v vb" style="left:598px;width:200px;top:768px;text-align:right">6 m</div>
<div class="v vb" style="left:702px;width:200px;top:768px;text-align:right">6 m</div>
<div class="v vb" style="left:922px;width:200px;top:768px;text-align:right">33 sq m</div>
<div class="v vb" style="left:1145px;width:200px;top:768px;text-align:right">33 sq m</div>
<div class="v" style="left:493px;width:200px;top:792px;text-align:right">23 m</div>
<div class="v" style="left:598px;width:200px;top:792px;text-align:right">6 m</div>
<div class="v" style="left:702px;width:200px;top:792px;text-align:right">6 m</div>
<div class="v" style="left:922px;width:200px;top:792px;text-align:right">33 sq m</div>
<div class="v" style="left:1145px;width:200px;top:792px;text-align:right">33 sq m</div>
<div class="v" style="left:399px;top:744px">3/25/2026 ...</div>
<div class="v" style="left:491px;top:744px">385 cu m</div>
<div class="v" style="left:1353px;top:744px">cu m</div>
<div class="v" style="left:399px;top:792px">3/25/2026 ...</div>
<div class="v" style="left:491px;top:792px">33 sq m</div>
<div class="v" style="left:1353px;top:792px">sq m</div>
<svg class="i" style="left:46px;top:773px" width="12" height="8"><path d="M1 1 L6 6 L11 1" style="stroke-width:1.2"/></svg>
<svg class="i" style="left:80px;top:790px" width="22" height="22"><path d="M2 2 H20 M2 2 V20" style="stroke:#9a8fd0;stroke-dasharray:1.5 1.5;stroke-width:1"/><path d="M4 20 V12 L10 6 H18 V20 Z" style="stroke-width:1.3"/></svg>
<div class="v" style="left:103px;top:792px;color:#e8e8e8">Area Measu</div>
<div id="status" class="a"></div>
<div class="t" style="left:2px;top:994px;font-size:15px;color:#e8e8e8">Ready</div>
<svg class="i" style="left:1254px;top:992px" width="20" height="20" viewBox="0 0 20 20"><path d="M6 2 V18 M12 2 V18 M2 6 H18 M2 12 H18"/></svg>
<svg class="i" style="left:1290px;top:992px" width="20" height="20" viewBox="0 0 20 20"><path d="M6 2 V15 M12 2 V8 M2 6 H18 M2 12 H9"/><path d="M11 12 H15 Q18 12 18 15 Q18 18 15 18 H11" style="stroke-width:1.6"/></svg>
<svg class="i" style="left:1327px;top:992px" width="20" height="20" viewBox="0 0 20 20"><path d="M2 2 H10 L14 6 V9 M2 2 V18 H8 M10 2 V6 H14"/><path d="M10 12 H14 Q17 12 17 15 Q17 18 14 18 H10" style="stroke-width:1.6"/></svg>
<svg class="i" style="left:1363px;top:992px" width="20" height="20" viewBox="0 0 20 20"><path d="M2 17 L9 3 L14 8 M5 12 H8"/><path d="M10 12 H14 Q17 12 17 15 Q17 18 14 18 H10" style="stroke-width:1.6"/></svg>
<svg class="i" style="left:1399px;top:992px" width="20" height="20" viewBox="0 0 20 20"><path d="M2 17 L12 4 L16 8 L6 18 Z"/><circle cx="15" cy="15" r="3" style="stroke:#3a8fd0;stroke-width:1.6"/></svg>
<div class="a" style="left:1427px;top:985px;width:36px;height:35px;background:#1f5b8a"></div>
<svg class="i" style="left:1434px;top:992px" width="22" height="20"><path d="M1 2 H21 V19 H1 Z M1 5 H21" style="stroke:#a8e4ff;stroke-width:1.3"/><path d="M5 9 H17 L14 7 M17 14 H5 L8 16" style="stroke:#a8e4ff;stroke-width:1.3"/></svg>
<svg class="i" style="left:1466px;top:999px" width="10" height="6"><path d="M1 1 L5 5 L9 1" style="stroke-width:1.1"/></svg>
<div class="t" style="left:1509px;top:994px;font-size:14.5px">3.75 in = 30'-0"</div>
<div class="t" style="left:1637px;top:994px;font-size:14.6px">42.00 x 30.00 in</div>
<div class="t" style="left:1798px;top:994px;font-size:14.8px">(-0.67, 15.75)</div>
<div id="menu" class="a">
<div class="mi" style="top:3px">Subject</div>
<svg class="i" style="left:5px;top:6px" width="14" height="10"><path d="M1 5 L5 9 L13 1" style="stroke:#cfcfcf;stroke-width:1.3"/></svg>
<div class="mi" style="top:25px">Page Label</div>
<div class="mi" style="top:47px">Page Index</div>
<div class="mi" style="top:69px">Lock</div>
<div class="mi" style="top:91px">Author</div>
<svg class="i" style="left:5px;top:94px" width="14" height="10"><path d="M1 5 L5 9 L13 1" style="stroke:#cfcfcf;stroke-width:1.3"/></svg>
<div class="mi" style="top:113px">Date</div>
<svg class="i" style="left:5px;top:116px" width="14" height="10"><path d="M1 5 L5 9 L13 1" style="stroke:#cfcfcf;stroke-width:1.3"/></svg>
<div class="mi" style="top:135px">Tick mark</div>
<div class="mi" style="top:157px">Creation Date</div>
<div class="mi" style="top:179px">Colour</div>
<div class="mi" style="top:201px">Comments</div>
<svg class="i" style="left:5px;top:204px" width="14" height="10"><path d="M1 5 L5 9 L13 1" style="stroke:#cfcfcf;stroke-width:1.3"/></svg>
<div class="mi" style="top:223px">Length</div>
<svg class="i" style="left:5px;top:226px" width="14" height="10"><path d="M1 5 L5 9 L13 1" style="stroke:#cfcfcf;stroke-width:1.3"/></svg>
<div class="mi" style="top:245px">Width</div>
<svg class="i" style="left:5px;top:248px" width="14" height="10"><path d="M1 5 L5 9 L13 1" style="stroke:#cfcfcf;stroke-width:1.3"/></svg>
<div class="mi" style="top:267px">Height</div>
<svg class="i" style="left:5px;top:270px" width="14" height="10"><path d="M1 5 L5 9 L13 1" style="stroke:#cfcfcf;stroke-width:1.3"/></svg>
<div class="mi" style="top:289px">Depth</div>
<svg class="i" style="left:5px;top:292px" width="14" height="10"><path d="M1 5 L5 9 L13 1" style="stroke:#cfcfcf;stroke-width:1.3"/></svg>
<div class="mi" style="top:311px">Rise/Drop</div>
<div class="mi" style="top:333px">Slope</div>
<div class="mi" style="top:355px">X</div>
<div class="mi" style="top:377px">Y</div>
<div class="mi" style="top:399px">X Centre</div>
<div class="mi" style="top:421px">Y Centre</div>
<div class="mi" style="top:443px">Document Width</div>
<div class="mi" style="top:465px">Document Height</div>
<div class="a" style="left:1px;top:485px;width:202px;height:21px;background:#1f5b8a"></div>
<div class="mi" style="top:487px;color:#dff2ff">Area</div>
<svg class="i" style="left:5px;top:490px" width="14" height="10"><path d="M1 5 L5 9 L13 1" style="stroke:#9ad8ff;stroke-width:1.3"/></svg>
<div class="mi" style="top:509px">Volume</div>
<svg class="i" style="left:5px;top:512px" width="14" height="10"><path d="M1 5 L5 9 L13 1" style="stroke:#cfcfcf;stroke-width:1.3"/></svg>
<div class="mi" style="top:531px">Measurement</div>
<svg class="i" style="left:5px;top:534px" width="14" height="10"><path d="M1 5 L5 9 L13 1" style="stroke:#cfcfcf;stroke-width:1.3"/></svg>
<div class="mi" style="top:553px">Radius</div>
<div class="mi" style="top:575px">Status</div>
<div class="mi" style="top:597px">Wall Area</div>
<div class="mi" style="top:619px">Count</div>
<div class="mi" style="top:641px">Unit</div>
<svg class="i" style="left:5px;top:644px" width="14" height="10"><path d="M1 5 L5 9 L13 1" style="stroke:#cfcfcf;stroke-width:1.3"/></svg>
<div class="mi" style="top:663px">Label</div>
<div class="mi" style="top:685px">Sequence</div>
<div class="mi" style="top:707px">3D View</div>
<div class="mi" style="top:729px">Layer</div>
<div class="mi" style="top:751px">Legend</div>
<div class="mi" style="top:773px">Space</div>
<div class="mi" style="top:795px">Capture</div>
<div class="mi" style="top:817px">GoCanvas Status</div>
<div class="a" style="left:10px;top:840px;width:186px;height:1px;background:#8a8a8a"></div>
<div class="mi" style="top:845px">Select All</div>
<div class="mi" style="top:867px">Manage Columns...</div>
</div>
<div class="a" style="left:35px;top:638px;width:146px;height:45px;background:#27313a;border:3px solid #e8c468"></div>
<div class="t b" style="left:48px;top:653px;font-size:18px;color:#f4f4f4">Markups List</div>
<svg class="i" style="left:166px;top:658px" width="12" height="8"><path d="M1 1 L6 6 L11 1" style="stroke-width:1.2;stroke:#bbb"/></svg>
<div class="a" style="left:36px;top:683px;width:144px;height:80px;background:#3a3a3a"></div>
<div class="a" style="left:36px;top:683px;width:144px;height:24px;background:#1f5b8a"></div>
<div class="a" style="left:35px;top:707px;width:146px;height:3px;background:#e8c468"></div>
<svg class="i" style="left:41px;top:686px" width="20" height="18"><path d="M1 1 H19 V17 H1 Z M1 5.5 H19 M7 1 V17 M13 1 V17" style="stroke:#a8e4ff;stroke-width:1.2"/></svg>
<div class="t" style="left:76px;top:687px;font-size:15px;color:#b8e8ff">Columns</div>
<div class="t" style="left:76px;top:713px;font-size:15px">Markups</div>
<div class="t" style="left:76px;top:739px;font-size:15px">Capture</div>
<svg class="i" style="left:159px;top:691px" width="8" height="12"><path d="M1 1 L6 6 L1 11" style="stroke-width:1.1"/></svg>
<svg class="i" style="left:159px;top:717px" width="8" height="12"><path d="M1 1 L6 6 L1 11" style="stroke-width:1.1"/></svg>
<svg class="i" style="left:159px;top:743px" width="8" height="12"><path d="M1 1 L6 6 L1 11" style="stroke-width:1.1"/></svg>
</body></html>
